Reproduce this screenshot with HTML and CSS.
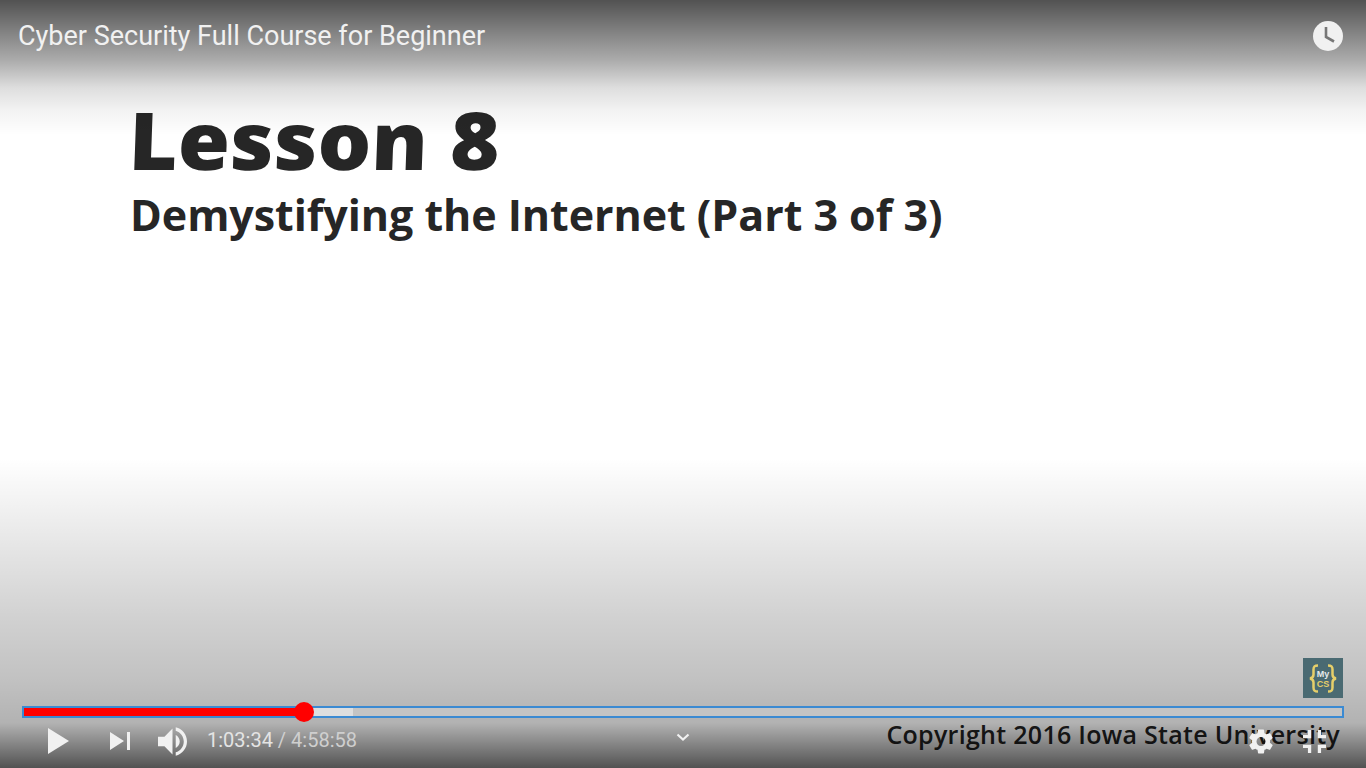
FILE: index.html
```html
<!DOCTYPE html>
<html lang="en">
<head>
<meta charset="utf-8">
<title>Cyber Security Full Course for Beginner</title>
<link rel="stylesheet" href="styles.css">
</head>
<body>
<main class="player">
  <section class="slide">
    <h1 class="lesson">Lesson 8</h1>
    <h2 class="subtitle">Demystifying the Internet (Part 3 of 3)</h2>
    <p class="copyright">Copyright 2016 Iowa State University</p>
  </section>
  <div class="shade"></div>
  <div class="chrome">
    <header class="topbar">
      <span class="video-title">Cyber Security Full Course for Beginner</span>
      <svg class="clock" viewBox="0 0 30 30" aria-hidden="true">
        <circle cx="15" cy="15" r="15" fill="#f1f1f1"/>
        <path d="M13 6v10l8 4.500" fill="none" stroke="#777" stroke-width="2.600"/>
      </svg>
    </header>
    <div class="brand">
      <svg class="brand-mark" viewBox="0 0 40 40" aria-hidden="true">
        <rect width="40" height="40" fill="#4a6a72"/>
        <path d="M15 7.500c-3.500 0-4.500 1-4.500 4v5c0 2.500-1 3.500-3.500 4 2.500.5 3.500 1.500 3.500 4v5c0 3 1 4 4.500 4M25 7.500c3.500 0 4.500 1 4.500 4v5c0 2.500 1 3.500 3.500 4-2.500.5-3.500 1.500-3.500 4v5c0 3-1 4-4.500 4" fill="none" stroke="#e6cf6a" stroke-width="2.500"/>
        <text class="brand-my" x="20" y="18.500" text-anchor="middle">My</text>
        <text class="brand-cs" x="20" y="28.500" text-anchor="middle">CS</text>
      </svg>
    </div>
    <div class="progress">
      <div class="track">
        <div class="buffered"></div>
        <div class="played"></div>
        <div class="thumb"></div>
      </div>
    </div>
    <div class="controls">
      <svg class="play" viewBox="0 0 21 26" aria-hidden="true"><path d="M0 0l21 13L0 26z" fill="#f1f1f1"/></svg>
      <svg class="next" viewBox="0 0 20 18" aria-hidden="true"><path d="M0 0l14 9L0 18zM17 0h3v18h-3z" fill="#f1f1f1"/></svg>
      <svg class="volume" viewBox="3 3 18 18" aria-hidden="true"><path d="M3 9v6h4l5 5V4L7 9H3zm13.500 3c0-1.770-1.020-3.290-2.500-4.030v8.050c1.480-.73 2.500-2.250 2.500-4.020zM14 3.230v2.060c2.890.86 5 3.540 5 6.710s-2.110 5.850-5 6.710v2.060c4.010-.91 7-4.490 7-8.770s-2.990-7.860-7-8.770z" fill="#f1f1f1"/></svg>
      <span class="time"><span class="time-now">1:03:34</span><span class="time-total"> / 4:58:58</span></span>
      <svg class="chevron" viewBox="0 0 14 9" aria-hidden="true"><path d="M1.500 1.500L7 6.500l5.500-5" fill="none" stroke="#f1f1f1" stroke-width="2.200"/></svg>
      <svg class="gear" viewBox="2.500 2 19 20" aria-hidden="true"><path d="M19.140 12.940c.04-.3.06-.61.06-.94 0-.32-.02-.64-.07-.94l2.030-1.580c.18-.14.23-.41.12-.61l-1.920-3.320c-.12-.22-.37-.29-.59-.22l-2.390.96c-.5-.38-1.030-.7-1.620-.94l-.36-2.540c-.04-.24-.24-.41-.48-.41h-3.840c-.24 0-.43.17-.47.41l-.36 2.540c-.59.24-1.130.57-1.620.94l-2.390-.96c-.22-.08-.47 0-.59.22L2.740 8.870c-.12.21-.08.47.12.61l2.030 1.580c-.05.3-.09.63-.09.94s.02.64.07.94l-2.030 1.580c-.18.14-.23.41-.12.61l1.920 3.320c.12.22.37.29.59.22l2.390-.96c.5.38 1.030.7 1.620.94l.36 2.540c.05.24.24.41.48.41h3.840c.24 0 .44-.17.47-.41l.36-2.540c.59-.24 1.130-.56 1.620-.94l2.390.96c.22.08.47 0 .59-.22l1.920-3.320c.12-.22.07-.47-.12-.61l-2.010-1.580zM12 15.600c-1.980 0-3.600-1.620-3.600-3.600s1.620-3.600 3.600-3.600 3.600 1.620 3.600 3.600-1.620 3.600-3.600 3.600z" fill="#f1f1f1"/></svg>
      <svg class="fullscreen" viewBox="5 5 14 14" aria-hidden="true"><path d="M5 16h3v3h2v-5H5v2zm3-8H5v2h5V5H8v3zm6 11h2v-3h3v-2h-5v5zm2-11V5h-2v5h5V8h-3z" fill="#f1f1f1"/></svg>
    </div>
  </div>
</main>
</body>
</html>
```
FILE: styles.css
```css
* { box-sizing: border-box; }
html, body { margin: 0; padding: 0; }
body { width: 1366px; height: 768px; overflow: hidden; background: #fff; }

.player {
  position: relative;
  width: 1366px;
  height: 768px;
  overflow: hidden;
  background: #fff;
}

.slide {
  height: 768px;
  display: flex;
  flex-direction: column;
  padding: 88px 26px 17px 130px;
  font-family: "Open Sans", "Liberation Sans", sans-serif;
  color: #262626;
}
.lesson {
  margin: 0 0 0 -3px;
  font-size: 80px;
  line-height: 102px;
  font-weight: 800;
  transform: skewX(-2deg) scaleX(1.057);
  transform-origin: left bottom;
}
.subtitle {
  margin: 0;
  font-size: 43px;
  line-height: 50px;
  font-weight: 700;
  letter-spacing: -.050px;
}
.copyright {
  margin: auto 0 0 0;
  align-self: flex-end;
  font-size: 25px;
  line-height: 34px;
  font-weight: 600;
  letter-spacing: .290px;
  color: #222;
}

.shade {
  position: absolute;
  inset: 0;
  background:
    linear-gradient(to bottom, rgba(0,0,0,.68) 0, rgba(0,0,0,.5) 30px, rgba(0,0,0,.33) 60px, rgba(0,0,0,.13) 88px, rgba(0,0,0,.05) 110px, rgba(0,0,0,0) 135px),
    linear-gradient(to top, rgba(0,0,0,.68) 0, rgba(0,0,0,.3) 45px, rgba(0,0,0,.24) 90px, rgba(0,0,0,.18) 150px, rgba(0,0,0,0) 310px);
}

.chrome {
  position: absolute;
  inset: 0;
  display: flex;
  flex-direction: column;
}
.topbar {
  display: flex;
  align-items: center;
  justify-content: space-between;
  padding: 21px 23px 0 18px;
}
.video-title {
  font-family: Roboto, "Liberation Sans", sans-serif;
  font-size: 27px;
  line-height: 30px;
  color: #f1f1f1;
}
.clock { width: 30px; height: 30px; }

.brand {
  margin-top: auto;
  padding: 0 23px 8px 0;
  display: flex;
  justify-content: flex-end;
}
.brand-mark { display: block; width: 40px; height: 40px; }
.brand-my, .brand-cs {
  font-family: "Liberation Sans", sans-serif;
  font-size: 9px;
  font-weight: 700;
}
.brand-my { fill: #e4e8ea; }
.brand-cs { fill: #e6cf6a; }

.progress { padding: 0 22px; }
.track {
  position: relative;
  height: 12px;
  border: 2px solid #3b8ad2;
  background: #c4c4c4;
}
.buffered {
  position: absolute;
  left: 0; top: 0; bottom: 0;
  width: 329px;
  background: #dedede;
}
.played {
  position: absolute;
  left: 0; top: 0; bottom: 0;
  width: 280px;
  background: #f00;
}
.thumb {
  position: absolute;
  left: 270px;
  top: -6px;
  width: 20px;
  height: 20px;
  border-radius: 50%;
  background: #f00;
}

.controls {
  display: flex;
  align-items: center;
  height: 50px;
  padding: 0 0 4px 48px;
}
.play { width: 21px; height: 26px; flex: none; }
.next { width: 20px; height: 18px; margin-left: 41px; flex: none; }
.volume { width: 29px; height: 29px; margin-left: 28px; flex: none; }
.time {
  margin-left: 20px;
  font-family: Roboto, "Liberation Sans", sans-serif;
  font-size: 20px;
  line-height: 22px;
  margin-bottom: 2px;
  white-space: nowrap;
}
.time-now { color: #e4e4e4; }
.time-total { color: #cfcfcf; }
.chevron { width: 14px; height: 9px; margin-left: 319px; margin-bottom: 8px; flex: none; }
.gear { width: 24px; height: 25px; margin-left: 559px; flex: none; }
.fullscreen { width: 25px; height: 23px; margin-left: 29px; flex: none; }
```
